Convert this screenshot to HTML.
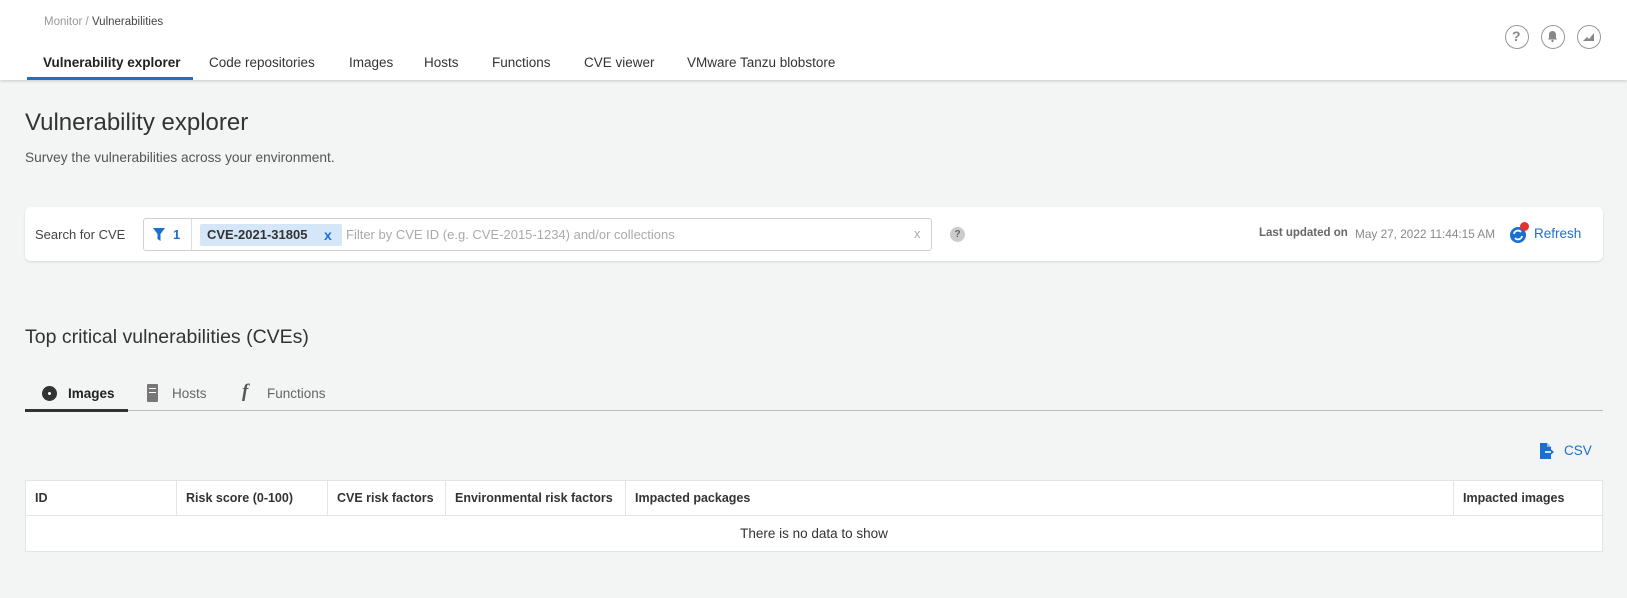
<!DOCTYPE html>
<html><head><meta charset="utf-8"><style>
*{box-sizing:border-box;margin:0;padding:0}
body{width:1627px;height:598px;background:#f3f4f4;font-family:"Liberation Sans",sans-serif;color:#333;position:relative;overflow:hidden}
.a{position:absolute;white-space:nowrap}
.hdr{position:absolute;left:0;top:0;width:1627px;height:80px;background:#fff;box-shadow:0 1px 3px rgba(0,0,0,.18)}
.tab{position:absolute;top:55px;font-size:13.5px;color:#333}
.ic{position:absolute;top:25px;width:24px;height:24px;border:1.5px solid #999;border-radius:50%}
.card{position:absolute;left:25px;top:207px;width:1578px;height:54px;background:#fff;border-radius:6px;box-shadow:0 1px 2px rgba(0,0,0,.12)}
table{position:absolute;left:25px;top:480px;width:1578px;border-collapse:collapse;background:#fff;table-layout:fixed}
th{font-size:12.5px;font-weight:bold;text-align:left;padding:0 9px;height:35px;border:1px solid #e4e4e4;color:#333;white-space:nowrap;overflow:hidden}
td{height:36px;border:1px solid #e4e4e4;text-align:center;font-size:13.5px}
</style></head><body>
<div class="hdr"></div>
<div class="a" style="left:44px;top:16px;font-size:11.5px;color:#999">Monitor / <span style="color:#444">Vulnerabilities</span></div>
<div class="tab a" style="left:43px;font-weight:bold;color:#222">Vulnerability explorer</div>
<div class="tab a" style="left:209px">Code repositories</div>
<div class="tab a" style="left:349px">Images</div>
<div class="tab a" style="left:424px">Hosts</div>
<div class="tab a" style="left:492px">Functions</div>
<div class="tab a" style="left:584px">CVE viewer</div>
<div class="tab a" style="left:687px">VMware Tanzu blobstore</div>
<div class="a" style="left:27px;top:77px;width:166px;height:3px;background:#1a6fd1"></div>
<div class="ic" style="left:1505px"><span class="a" style="left:6px;top:2px;font-size:14px;font-weight:bold;color:#888">?</span></div>
<div class="ic" style="left:1541px"><svg width="21" height="21" viewBox="0 0 21 21"><path d="M10.5 5c-2.5 0-3.5 2-3.5 4v3l-1 1.5h9l-1-1.5V9c0-2-1-4-3.5-4z" fill="#888"/><circle cx="10.5" cy="15" r="1.2" fill="#888"/></svg></div>
<div class="ic" style="left:1577px"><svg width="21" height="21" viewBox="0 0 21 21"><path d="M5 15l4-4 2 2 5-6v8z" fill="#888"/></svg></div>

<div class="a" style="left:25px;top:109px;font-size:24px;color:#333">Vulnerability explorer</div>
<div class="a" style="left:25px;top:150px;font-size:13.7px;color:#555">Survey the vulnerabilities across your environment.</div>

<div class="card">
<div class="a" style="left:10px;top:20px;font-size:13px;color:#444">Search for CVE</div>
<div class="a" style="left:118px;top:11px;width:789px;height:33px;border:1px solid #d0d0d0;border-radius:3px;background:#fff">
 <div class="a" style="left:0;top:0;width:48px;height:31px;border-right:1px solid #ddd"><svg class="a" style="left:9px;top:9px" width="12" height="13" viewBox="0 0 12 13"><path d="M0 0h12L7.5 6v7L4.5 11V6z" fill="#1a6fd1"/></svg><span class="a" style="left:29px;top:8px;font-size:13px;color:#1a6fd1;font-weight:bold">1</span></div>
 <div class="a" style="left:56px;top:5px;width:142px;height:22px;background:#d5e6f8;border-radius:2px"><span class="a" style="left:7px;top:3px;font-size:13px;font-weight:bold;color:#333">CVE-2021-31805</span><span class="a" style="left:124px;top:3px;font-size:14px;font-weight:bold;color:#1a6fd1">x</span></div>
 <div class="a" style="left:202px;top:8px;font-size:13px;color:#aaa">Filter by CVE ID (e.g. CVE-2015-1234) and/or collections</div>
 <div class="a" style="left:770px;top:7px;font-size:13px;color:#aaa">x</div>
</div>
<div class="a" style="left:925px;top:20px;width:15px;height:15px;border-radius:50%;background:#ccc;color:#666;font-size:10px;font-weight:bold;text-align:center;line-height:15px">?</div>
<div class="a" style="left:1234px;top:20px;font-size:11.5px;color:#666;font-weight:bold">Last updated on</div>
<div class="a" style="left:1330px;top:20px;font-size:11.8px;color:#888">May 27, 2022 11:44:15 AM</div>
<div class="a" style="left:1485px;top:20px;width:16px;height:16px;border-radius:50%;background:#1a6fd1"><svg width="16" height="16" viewBox="0 0 16 16"><path d="M4 7a4 4 0 0 1 7-2M12 9a4 4 0 0 1-7 2" stroke="#fff" stroke-width="1.8" fill="none"/></svg></div>
<div class="a" style="left:1495px;top:15px;width:9px;height:9px;border-radius:50%;background:#e53030"></div>
<div class="a" style="left:1509px;top:19px;font-size:13.5px;color:#1a6fd1">Refresh</div>
</div>

<div class="a" style="left:25px;top:326px;font-size:19.5px;color:#333">Top critical vulnerabilities (CVEs)</div>
<div class="a" style="left:25px;top:410px;width:1578px;height:1px;background:#bbb"></div>
<div class="a" style="left:25px;top:409px;width:103px;height:3px;background:#333"></div>
<div class="a" style="left:42px;top:386px;width:15px;height:15px;border-radius:50%;background:#333"><div class="a" style="left:6px;top:6px;width:3px;height:3px;border-radius:50%;background:#fff"></div></div>
<div class="a" style="left:68px;top:386px;font-size:13.5px;font-weight:bold;color:#222">Images</div>
<div class="a" style="left:147px;top:384px;width:11px;height:18px;background:#777;border-radius:1px"><div class="a" style="left:2px;top:4px;width:7px;height:1px;background:#fff"></div><div class="a" style="left:2px;top:8px;width:7px;height:1px;background:#fff"></div></div>
<div class="a" style="left:172px;top:386px;font-size:13.5px;color:#666">Hosts</div>
<div class="a" style="left:242px;top:381px;font-size:19px;font-style:italic;font-weight:bold;color:#555;font-family:'Liberation Serif',serif">f</div>
<div class="a" style="left:267px;top:386px;font-size:13.5px;color:#666">Functions</div>

<svg class="a" style="left:1540px;top:443px" width="17" height="16" viewBox="0 0 17 16"><path d="M0 0h7l4 4v12H0z" fill="#1a6fd1"/><path d="M7 0v4h4" fill="#8bb8ea"/><path d="M5 9h7" stroke="#fff" stroke-width="1.6"/><path d="M11 6.5L14 9l-3 2.5z" fill="#1a6fd1"/></svg>
<div class="a" style="left:1564px;top:443px;font-size:13.5px;color:#1a6fd1">CSV</div>

<table>
<tr><th style="width:151px">ID</th><th style="width:151px">Risk score (0-100)</th><th style="width:118px">CVE risk factors</th><th style="width:180px">Environmental risk factors</th><th style="width:828px">Impacted packages</th><th>Impacted images</th></tr>
<tr><td colspan="6">There is no data to show</td></tr>
</table>
</body></html>
